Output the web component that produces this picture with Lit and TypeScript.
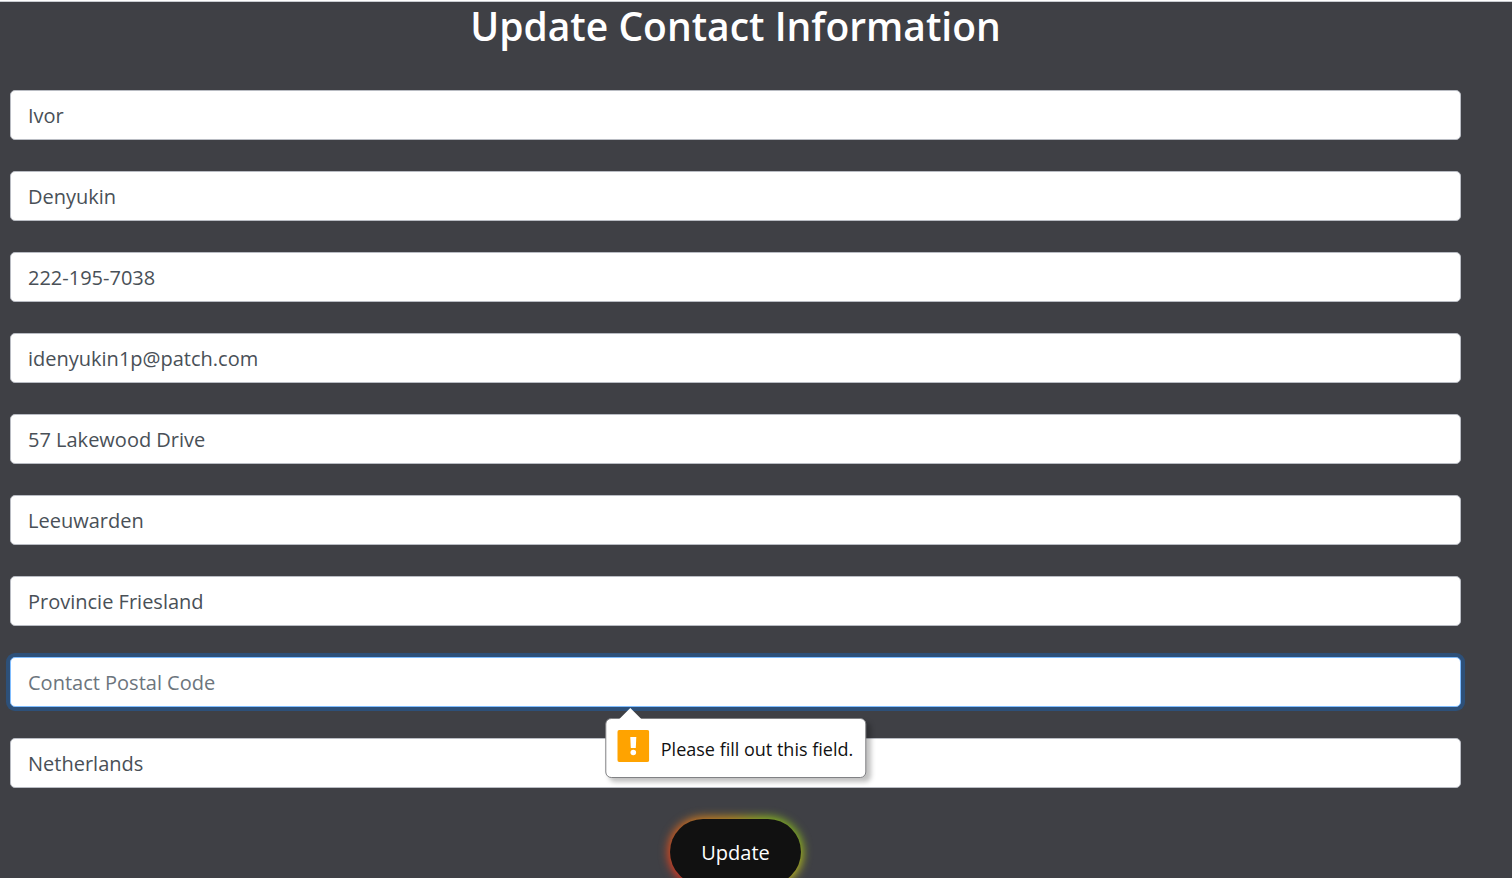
import { LitElement, html, css, nothing } from "lit";
import { customElement, property } from "lit/decorators.js";

interface Field {
  name: string;
  label: string;
  type: string;
  value: string;
}

const FIELDS: Field[] = [
  { name: "first-name", label: "Contact First Name", type: "text", value: "Ivor" },
  { name: "last-name", label: "Contact Last Name", type: "text", value: "Denyukin" },
  { name: "phone", label: "Contact Phone", type: "tel", value: "222-195-7038" },
  { name: "email", label: "Contact Email", type: "email", value: "idenyukin1p@patch.com" },
  { name: "address", label: "Contact Address", type: "text", value: "57 Lakewood Drive" },
  { name: "city", label: "Contact City", type: "text", value: "Leeuwarden" },
  { name: "region", label: "Contact Region", type: "text", value: "Provincie Friesland" },
  { name: "postal-code", label: "Contact Postal Code", type: "text", value: "" },
  { name: "country", label: "Contact Country", type: "text", value: "Netherlands" },
];

@customElement("validation-bubble")
export class ValidationBubble extends LitElement {
  @property() message = "";

  static styles = css`
    :host {
      display: flex;
      align-items: flex-start;
      gap: 12px;
      box-sizing: border-box;
      height: 60px;
      padding: 11px 12px 11px 11px;
      border: 1px solid #808184;
      border-radius: 6px;
      background: #fff;
      color: #111;
      box-shadow: 4px 4px 5px rgba(0, 0, 0, 0.25);
      font-size: 18px;
      line-height: 38px;
      white-space: nowrap;
    }
    .tip {
      position: absolute;
      left: 12px;
      top: -11px;
      width: 24px;
      height: 12px;
    }
    .mark {
      flex: none;
      width: 32px;
      height: 32px;
    }
  `;

  render() {
    return html`
      <svg class="tip" viewBox="0 0 24 12" aria-hidden="true">
        <path d="M0 12 L12 0 L24 12Z" fill="#fff" />
      </svg>
      <svg class="mark" viewBox="0 0 32 32" aria-hidden="true">
        <rect width="32" height="32" rx="2" fill="#ffa300" />
        <path d="M13 7h6l-.5 11h-5z" fill="#fff" />
        <circle cx="16" cy="22.5" r="2.8" fill="#fff" />
      </svg>
      <span>${this.message}</span>
    `;
  }
}

@customElement("app-root")
export class AppRoot extends LitElement {
  static styles = css`
    :host {
      display: block;
      box-sizing: border-box;
      height: 100vh;
      overflow: hidden;
      border-top: 1px solid #fff;
      background: #3f4045;
      font-family: "Open Sans", "Noto Sans", sans-serif;
      color: #fff;
    }
    .page {
      padding: 0 51px 0 10px;
      border-top: 1px solid #c9ccd1;
    }
    h1 {
      margin: 0 0 40px;
      font-size: 39px;
      font-weight: 600;
      line-height: 48px;
      text-align: center;
    }
    form {
      display: flex;
      flex-direction: column;
      gap: 31px;
    }
    .field {
      position: relative;
      display: flex;
    }
    input {
      flex: 1;
      min-width: 0;
      height: 50px;
      box-sizing: border-box;
      padding: 1px 17px 0;
      border: 1px solid #b9bcc3;
      border-radius: 5px;
      background: #fff;
      color: #495057;
      font: inherit;
      font-size: 20px;
      outline: none;
    }
    input::placeholder {
      color: #6c757d;
      opacity: 1;
    }
    .invalid input {
      border-color: #80bdff;
      box-shadow: 0 0 0 4px #2d5079;
    }
    validation-bubble {
      position: absolute;
      z-index: 1;
      left: 50%;
      top: calc(100% + 11px);
      transform: translateX(-50%);
    }
    .glow {
      position: relative;
      z-index: 0;
      align-self: center;
      border-radius: 33px;
    }
    .glow::before {
      content: "";
      position: absolute;
      z-index: -1;
      inset: -2px;
      border-radius: 35px;
      filter: blur(5px);
      background: conic-gradient(
        #c99a18 0deg,
        #8fc41c 50deg,
        #86b81c 75deg,
        #c9c01c 110deg,
        #d8a01c 180deg,
        #f0301c 245deg,
        #e0501c 275deg,
        #d8801c 310deg,
        #c99a18 360deg
      );
    }
    button {
      display: block;
      height: 66px;
      padding: 0 31px;
      border: 0;
      border-radius: 33px;
      background: #111;
      color: #fff;
      font: inherit;
      font-size: 20px;
    }
  `;

  private renderField(field: Field) {
    const missing = field.value === "";
    return html`
      <div class="field ${missing ? "invalid" : ""}">
        <input
          type=${field.type}
          name=${field.name}
          aria-label=${field.label}
          placeholder=${field.label}
          .value=${field.value}
          required
        />
        ${missing
          ? html`<validation-bubble role="alert" message="Please fill out this field."></validation-bubble>`
          : nothing}
      </div>
    `;
  }

  render() {
    return html`
      <main class="page">
        <h1>Update Contact Information</h1>
        <form>
          ${FIELDS.map((field) => this.renderField(field))}
          <div class="glow"><button type="submit">Update</button></div>
        </form>
      </main>
    `;
  }
}
